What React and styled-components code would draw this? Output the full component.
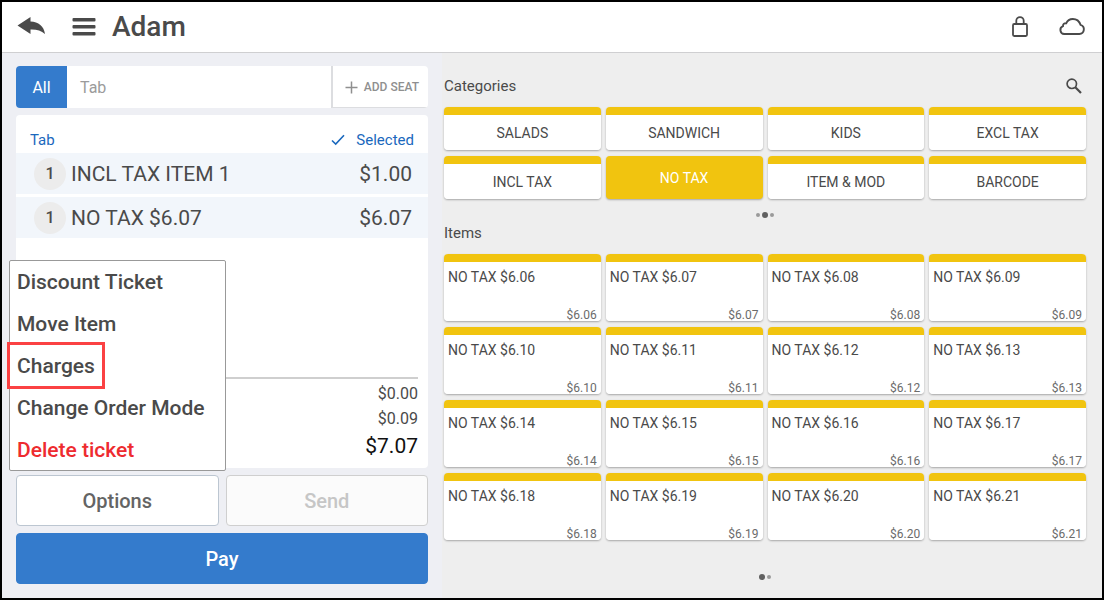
import { useState } from "react";
import styled, { createGlobalStyle, css } from "styled-components";

const GlobalStyle = createGlobalStyle`
  * {
    box-sizing: border-box;
  }
  body {
    margin: 0;
    font-family: Roboto, "Liberation Sans", sans-serif;
    color: #4a4a4a;
  }
  button {
    font-family: inherit;
    color: inherit;
    border: none;
    margin: 0;
    padding: 0;
    background: none;
    cursor: pointer;
  }
  svg {
    display: block;
  }
`;

const Container = styled.div`
  min-height: 100vh;
  display: flex;
  flex-direction: column;
  border: 2px solid #000;
  background: #eeeff4;
`;

const Header = styled.header`
  display: flex;
  align-items: center;
  height: 51px;
  padding: 0 16px 0 15px;
  background: #fff;
  border-bottom: 1px solid #cfcfd1;
`;

const Title = styled.h1`
  flex: 1;
  margin: 0 0 0 16px;
  font-size: 28px;
  line-height: 32px;
  font-weight: 500;
`;

const IconButton = styled.button`
  margin-left: ${(props) => props.$gap || 0}px;
`;

const Main = styled.main`
  flex: 1;
  display: flex;
`;

const Ticket = styled.section`
  width: 40%;
  display: flex;
  flex-direction: column;
  gap: 7px;
  padding: 13px 14px 14px;
`;

const Seats = styled.div`
  display: flex;
  height: 42px;
  border-radius: 4px;
  overflow: hidden;
  background: #fff;
`;

const Seat = styled.button`
  flex: ${(props) => (props.$wide ? 1 : "none")};
  padding: 0 13px;
  min-width: 51px;
  text-align: ${(props) => (props.$wide ? "left" : "center")};
  font-size: 16px;
  color: ${(props) => (props.$active ? "#fff" : "#9b9b9b")};
  background: ${(props) => (props.$active ? "#347bcc" : "#fff")};
`;

const AddSeat = styled.button`
  display: flex;
  align-items: center;
  gap: 6px;
  padding: 0 9px 0 14px;
  font-size: 12px;
  font-weight: 500;
  color: #8f8f8f;
  box-shadow: inset 2px -1px 0 #dcdde0;
`;

const Card = styled.div`
  flex: 1;
  display: flex;
  flex-direction: column;
  background: #fff;
  border-radius: 4px;
`;

const CardHead = styled.div`
  display: flex;
  align-items: center;
  height: 38px;
  padding: 12px 14px 0;
  font-size: 15px;
  color: #1a68bd;
`;

const Selected = styled.span`
  display: flex;
  align-items: center;
  gap: 11px;
  margin-left: auto;
`;

const Lines = styled.ul`
  list-style: none;
  margin: 0;
  padding: 0;
  display: flex;
  flex-direction: column;
  gap: 3px;
`;

const Line = styled.li`
  display: flex;
  align-items: center;
  height: 41px;
  padding: 0 16px 0 18px;
  font-size: 21px;
  background: #f2f6fb;
`;

const Qty = styled.span`
  width: 32px;
  height: 32px;
  margin-right: 5px;
  border-radius: 50%;
  background: #ececec;
  font-size: 16px;
  line-height: 32px;
  font-weight: 500;
  text-align: center;
`;

const Price = styled.span`
  margin-left: auto;
`;

const Totals = styled.div`
  margin: auto 10px 8px;
  padding-top: 2px;
  border-top: 2px solid #cfcfcf;
  text-align: right;
`;

const Total = styled.div`
  font-size: 16px;
  line-height: 25px;
  ${(props) =>
    props.$due &&
    css`
      font-size: 21px;
      line-height: 28px;
      padding-top: 1px;
      color: #111;
    `}
`;

const Actions = styled.div`
  position: relative;
  display: grid;
  grid-template-columns: 1fr 1fr;
  gap: 7px;
`;

const Button = styled.button`
  height: 51px;
  font-size: 20px;
  font-weight: 500;
  color: #646464;
  background: #fff;
  border: 1px solid #bcc6d1;
  border-radius: 4px;
  &:disabled {
    color: #c6c6c6;
    background: #fbfbfb;
    border-color: #cfcfcf;
    cursor: default;
  }
`;

const PayButton = styled(Button)`
  color: #fff;
  background: #347bcc;
  border-color: #347bcc;
`;

// opens upwards from the Options button
const Menu = styled.div`
  position: absolute;
  left: -7px;
  bottom: calc(100% + 4px);
  width: 217px;
  display: flex;
  flex-direction: column;
  align-items: flex-start;
  gap: 1px;
  background: #fff;
  border: 1px solid #999;
  border-radius: 2px;
`;

const MenuItem = styled.button`
  height: 41px;
  padding: 0 7px;
  font-size: 21px;
  font-weight: 500;
  color: ${(props) => (props.$danger ? "#ee2b2f" : "#4a4a4a")};
  ${(props) =>
    props.$marked &&
    css`
      outline: 3px solid #fb4143;
    `}
`;

const Catalog = styled.section`
  flex: 1;
  display: flex;
  flex-direction: column;
  padding: 24px 16px 12px 2px;
  background: #eee;
`;

const CatalogHead = styled.div`
  display: flex;
  align-items: center;
  justify-content: space-between;
  height: 18px;
  margin-bottom: 12px;
  padding-right: 4px;
`;

const Heading = styled.h2`
  margin: 0;
  font-size: 15px;
  line-height: 18px;
  font-weight: 400;
`;

const Grid = styled.div`
  display: grid;
  grid-template-columns: repeat(4, 1fr);
  gap: 5px;
`;

const Tile = styled.button`
  border-radius: 4px;
  font-size: 14px;
  line-height: 16px;
  background: linear-gradient(#f1c40f 8px, #fff 8px);
  box-shadow: 0 1px 2px rgba(0, 0, 0, 0.3);
`;

const Category = styled(Tile)`
  height: 43px;
  padding-top: 8px;
  margin-bottom: 1px;
  ${(props) =>
    props.$active &&
    css`
      padding-top: 0;
      color: #fff;
      background: #f1c40f;
    `}
`;

const Item = styled(Tile)`
  display: flex;
  flex-direction: column;
  justify-content: space-between;
  height: 67px;
  padding: 15px 4px 0;
  margin-bottom: 1px;
  text-align: left;
`;

const ItemPrice = styled.span`
  align-self: flex-end;
  font-size: 12px;
  line-height: 12px;
  color: #6b6b6b;
`;

const Dots = styled.div`
  display: flex;
  align-items: center;
  justify-content: center;
  gap: 2px;
  height: 18px;
  margin-top: ${(props) => (props.$last ? "auto" : "6px")};
`;

const Dot = styled.span`
  width: ${(props) => (props.$active ? 6 : 4)}px;
  height: ${(props) => (props.$active ? 6 : 4)}px;
  border-radius: 50%;
  background: ${(props) => (props.$active ? "#606060" : "#9a9a9a")};
`;

const BackIcon = () => (
  <svg width="30" height="20" viewBox="0 1 30 20" fill="#4a4a4a">
    <path d="M0.5 9.5 L13.5 1 V5.5 C21.5 5.7 27 10.3 28 18 C24 14.2 19.5 13.2 13.5 13.4 V18 Z" />
  </svg>
);

const MenuIcon = () => (
  <svg width="24" height="20" viewBox="0 0 24 20" fill="#4a4a4a">
    <rect x="0.5" y="1" width="23" height="3.4" rx="1" />
    <rect x="0.5" y="8" width="23" height="3.4" rx="1" />
    <rect x="0.5" y="15" width="23" height="3.4" rx="1" />
  </svg>
);

const LockIcon = () => (
  <svg width="18" height="22" viewBox="0 0 18 22" fill="none" stroke="#4a4a4a" strokeWidth="1.8">
    <rect x="2" y="8" width="14" height="12" rx="1.2" />
    <path d="M5.3 8 V4.8 a3.7 3.7 0 0 1 7.4 0 V8" />
  </svg>
);

const CloudIcon = () => (
  <svg width="28" height="20" viewBox="0 0 28 20" fill="none" stroke="#4a4a4a" strokeWidth="1.9">
    <path d="M6.2 17 H21.3 a4.7 4.7 0 0 0 1.2 -9.2 C21.3 4.2 18.4 2 14.8 2 C11.6 2 9.4 3.5 8.3 6.2 C6 6 4.9 7.3 5 9.1 A4.100 4.100 0 0 0 6.2 17 Z" />
  </svg>
);

const SearchIcon = () => (
  <svg width="16" height="16" viewBox="0 0 16 16" fill="none" stroke="#4a4a4a">
    <circle cx="5.8" cy="5.8" r="4.7" strokeWidth="1.7" />
    <path d="M9.3 9.3 L15 15" strokeWidth="2.2" />
  </svg>
);

const PlusIcon = () => (
  <svg width="13" height="13" viewBox="0 0 13 13" fill="none" stroke="#8f8f8f" strokeWidth="1.5">
    <path d="M6.5 0.5 V12.5 M0.5 6.5 H12.5" />
  </svg>
);

const CheckIcon = () => (
  <svg width="14" height="12" viewBox="0 0 14 12" fill="none" stroke="#1a68bd" strokeWidth="1.6">
    <path d="M1 6.5 L4.7 10 L13 1.2" />
  </svg>
);

const lines = [
  { qty: 1, name: "INCL TAX ITEM 1", price: "$1.00" },
  { qty: 1, name: "NO TAX $6.07", price: "$6.07" },
];

const categories = [
  "SALADS",
  "SANDWICH",
  "KIDS",
  "EXCL TAX",
  "INCL TAX",
  "NO TAX",
  "ITEM & MOD",
  "BARCODE",
];

const prices = [
  "$6.06", "$6.07", "$6.08", "$6.09",
  "$6.10", "$6.11", "$6.12", "$6.13",
  "$6.14", "$6.15", "$6.16", "$6.17",
  "$6.18", "$6.19", "$6.20", "$6.21",
];

const App = () => {
  const [menuOpen, setMenuOpen] = useState(true);
  const [category, setCategory] = useState("NO TAX");

  return (
    <Container>
      <GlobalStyle />
      <Header>
        <IconButton aria-label="Back">
          <BackIcon />
        </IconButton>
        <IconButton aria-label="Menu" $gap={25}>
          <MenuIcon />
        </IconButton>
        <Title>Adam</Title>
        <IconButton aria-label="Lock">
          <LockIcon />
        </IconButton>
        <IconButton aria-label="Cloud status" $gap={29}>
          <CloudIcon />
        </IconButton>
      </Header>
      <Main>
        <Ticket>
          <Seats>
            <Seat $active>All</Seat>
            <Seat $wide>Tab</Seat>
            <AddSeat>
              <PlusIcon />
              ADD SEAT
            </AddSeat>
          </Seats>
          <Card>
            <CardHead>
              Tab
              <Selected>
                <CheckIcon />
                Selected
              </Selected>
            </CardHead>
            <Lines>
              {lines.map((line) => (
                <Line key={line.name}>
                  <Qty>{line.qty}</Qty>
                  {line.name}
                  <Price>{line.price}</Price>
                </Line>
              ))}
            </Lines>
            <Totals>
              <Total>$0.00</Total>
              <Total>$0.09</Total>
              <Total $due>$7.07</Total>
            </Totals>
          </Card>
          <Actions>
            <Button onClick={() => setMenuOpen(!menuOpen)}>Options</Button>
            <Button disabled>Send</Button>
            {menuOpen && (
              <Menu>
                <MenuItem>Discount Ticket</MenuItem>
                <MenuItem>Move Item</MenuItem>
                <MenuItem $marked>Charges</MenuItem>
                <MenuItem>Change Order Mode</MenuItem>
                <MenuItem $danger>Delete ticket</MenuItem>
              </Menu>
            )}
          </Actions>
          <PayButton>Pay</PayButton>
        </Ticket>
        <Catalog>
          <CatalogHead>
            <Heading>Categories</Heading>
            <IconButton aria-label="Search">
              <SearchIcon />
            </IconButton>
          </CatalogHead>
          <Grid>
            {categories.map((name) => (
              <Category
                key={name}
                $active={name === category}
                onClick={() => setCategory(name)}
              >
                {name}
              </Category>
            ))}
          </Grid>
          <Dots>
            <Dot />
            <Dot $active />
            <Dot />
          </Dots>
          <CatalogHead>
            <Heading>Items</Heading>
          </CatalogHead>
          <Grid>
            {prices.map((price) => (
              <Item key={price}>
                NO TAX {price}
                <ItemPrice>{price}</ItemPrice>
              </Item>
            ))}
          </Grid>
          <Dots $last>
            <Dot $active />
            <Dot />
          </Dots>
        </Catalog>
      </Main>
    </Container>
  );
};

export default App;
